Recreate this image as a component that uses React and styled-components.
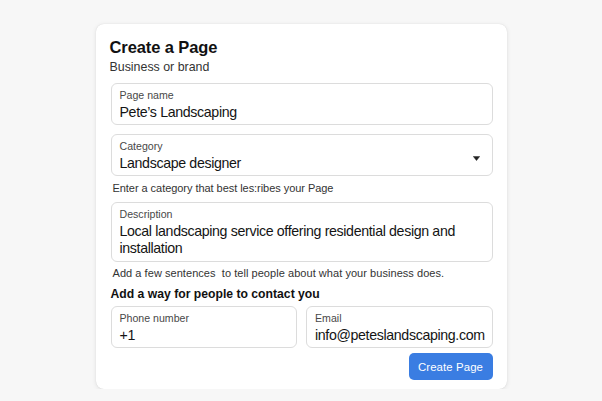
import React from "react";
import styled, { createGlobalStyle } from "styled-components";

const Global = createGlobalStyle`
  html, body { margin: 0; padding: 0; background: #f7f7f7; }
  body { font-family: "Liberation Sans", Arial, Helvetica, sans-serif; color: #1c1c1c; }
`;

const Page = styled.div`
  display: flex;
  justify-content: center;
  padding-top: 24px;
`;

const Card = styled.div`
  width: 411px;
  box-sizing: border-box;
  background: #fff;
  border-radius: 8px;
  box-shadow: 0 1px 5px rgba(0, 0, 0, 0.09), 0 0 1px rgba(0, 0, 0, 0.14);
  padding: 13px 14px 9px 14px;
  display: flex;
  flex-direction: column;
`;

const Title = styled.h1`
  margin: 0;
  font-size: 16.5px;
  line-height: 20px;
  font-weight: 700;
  letter-spacing: -0.1px;
  color: #111;
`;

const Subtitle = styled.div`
  font-size: 12.4px;
  line-height: 15px;
  color: #333;
  margin: 3px 0 8px 0;
`;

const Field = styled.div`
  box-sizing: border-box;
  border: 1px solid #dcdcdc;
  border-radius: 6px;
  padding: 5px 8px;
  height: ${p => p.$h || 42}px;
  margin-left: 1px;
  position: relative;
  display: flex;
  flex-direction: column;
  flex: ${p => (p.$grow ? "1 1 0" : "none")};
  min-width: 0;
`;

const Label = styled.div`
  font-size: 10.6px;
  line-height: 13px;
  color: #484848;
`;

const Value = styled.div`
  font-size: 14.2px;
  line-height: 17px;
  letter-spacing: -0.35px;
  color: #141414;
  margin-top: ${p => p.$mt ?? 2}px;
  white-space: ${p => (p.$nowrap ? "nowrap" : "normal")};
`;

const Caret = styled.svg`
  position: absolute;
  right: 12px;
  top: 21px;
`;

const Help = styled.div`
  font-size: 11px;
  line-height: 14px;
  letter-spacing: ${p => p.$ls || "-0.05px"};
  color: #333;
  margin: ${p => p.$m};
  padding-left: 3px;
`;

const Gap = styled.div`
  height: ${p => p.$h}px;
  flex: none;
`;

const Section = styled.div`
  font-size: 12.2px;
  line-height: 16px;
  font-weight: 700;
  color: #111;
  margin: 6px 0 4px 1px;
`;

const Row = styled.div`
  display: flex;
  gap: 8px;
`;

const Actions = styled.div`
  display: flex;
  justify-content: flex-end;
  margin-top: 5px;
`;

const Button = styled.button`
  font-family: inherit;
  background: #3a7de2;
  color: #fff;
  border: none;
  border-radius: 5px;
  font-size: 11.4px;
  font-weight: 400;
  letter-spacing: 0.1px;
  height: 27px;
  width: 84px;
  padding: 0;
  cursor: pointer;
`;

export default function App() {
  return (
    <>
      <Global />
      <Page>
        <Card>
          <Title>Create a Page</Title>
          <Subtitle>Business or brand</Subtitle>
          <Field>
            <Label>Page name</Label>
            <Value>Pete’s Landscaping</Value>
          </Field>
          <Gap $h={9} />
          <Field>
            <Label>Category</Label>
            <Value>Landscape designer</Value>
            <Caret width="7" height="5" viewBox="0 0 7 5">
              <path d="M0.3 0.4 H6.7 L3.5 4.6 Z" fill="#222" strokeLinejoin="round" stroke="#222" strokeWidth="0.5" />
            </Caret>
          </Field>
          <Help $m="5px 0 7px 0">Enter a category that best les:ribes your Page</Help>
          <Field $h={60}>
            <Label>Description</Label>
            <Value $mt={2}>Local landscaping service offering residential design and installation</Value>
          </Field>
          <Help $m="4px 0 0 0" $ls="0.05px">Add a few sentences&nbsp; to tell people about what your business does.</Help>
          <Section>Add a way for people to contact you</Section>
          <Row>
            <Field $grow>
              <Label>Phone number</Label>
              <Value>+1</Value>
            </Field>
            <Field $grow>
              <Label>Email</Label>
              <Value $nowrap>info@peteslandscaping.com</Value>
            </Field>
          </Row>
          <Actions>
            <Button>Create Page</Button>
          </Actions>
        </Card>
      </Page>
    </>
  );
}
